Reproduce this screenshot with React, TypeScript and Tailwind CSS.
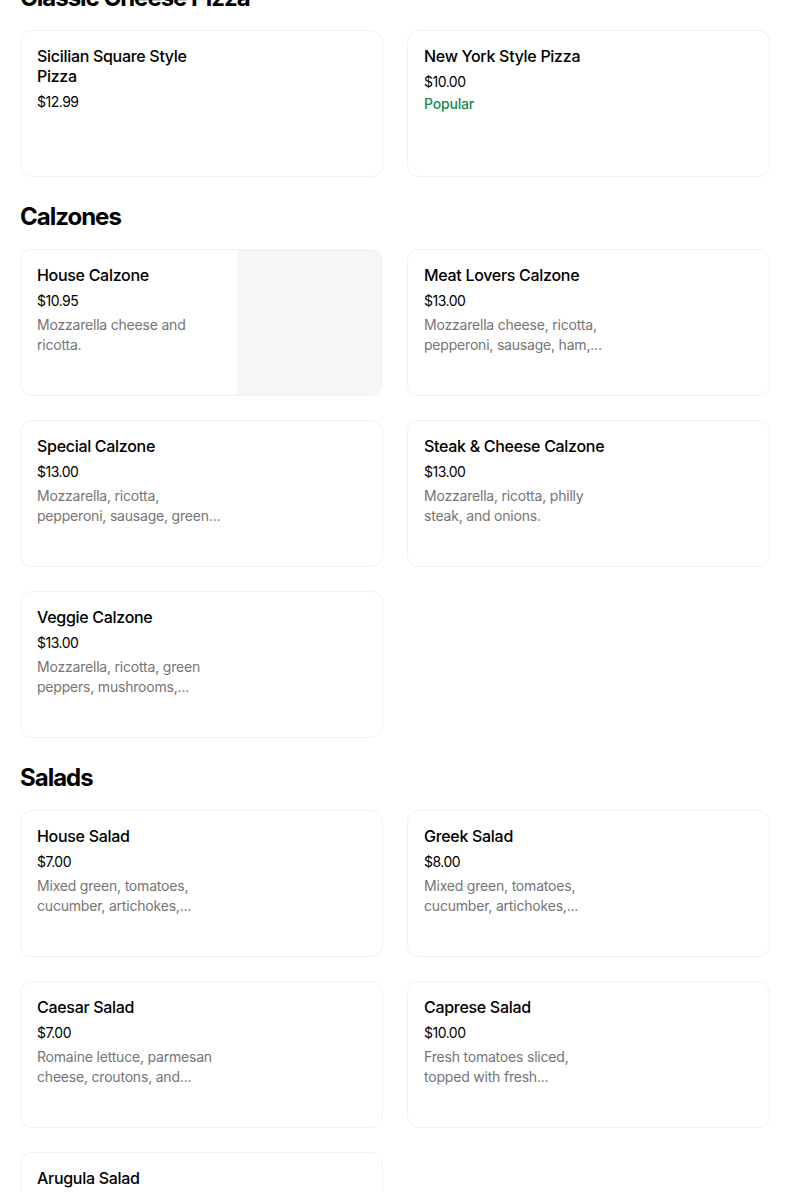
import React from "react";

type Item = { name: string; price: string; desc?: string; popular?: boolean; image?: boolean };
type Section = { title: string; items: Item[] };

const sections: Section[] = [
  {
    title: "Classic Cheese Pizza",
    items: [
      { name: "Sicilian Square Style Pizza", price: "$12.99" },
      { name: "New York Style Pizza", price: "$10.00", popular: true },
    ],
  },
  {
    title: "Calzones",
    items: [
      { name: "House Calzone", price: "$10.95", desc: "Mozzarella cheese and ricotta.", image: true },
      { name: "Meat Lovers Calzone", price: "$13.00", desc: "Mozzarella cheese, ricotta, pepperoni, sausage, ham,..." },
      { name: "Special Calzone", price: "$13.00", desc: "Mozzarella, ricotta, pepperoni, sausage, green..." },
      { name: "Steak & Cheese Calzone", price: "$13.00", desc: "Mozzarella, ricotta, philly steak, and onions." },
      { name: "Veggie Calzone", price: "$13.00", desc: "Mozzarella, ricotta, green peppers, mushrooms,..." },
    ],
  },
  {
    title: "Salads",
    items: [
      { name: "House Salad", price: "$7.00", desc: "Mixed green, tomatoes, cucumber, artichokes,..." },
      { name: "Greek Salad", price: "$8.00", desc: "Mixed green, tomatoes, cucumber, artichokes,..." },
      { name: "Caesar Salad", price: "$7.00", desc: "Romaine lettuce, parmesan cheese, croutons, and..." },
      { name: "Caprese Salad", price: "$10.00", desc: "Fresh tomatoes sliced, topped with fresh..." },
      { name: "Arugula Salad", price: "$9.00", desc: "Arugula, tomatoes, parmesan cheese and balsamic." },
    ],
  },
];

function Card({ item }: { item: Item }) {
  return (
    <div className="flex h-[147px] overflow-hidden rounded-xl border border-[#f1f1f1] bg-white">
      <div className="w-[204px] shrink-0 pl-4 pr-[2px] pt-[15px]">
        <div className="text-[16px] font-medium leading-5 tracking-[-0.3px] text-black">{item.name}</div>
        <div className="mt-[6px] text-[14px] leading-5 tracking-[-0.5px] text-black">{item.price}</div>
        {item.desc && (
          <div className="mt-1 line-clamp-2 text-[14px] leading-5 tracking-[-0.2px] text-[#757575]">{item.desc}</div>
        )}
        {item.popular && (
          <div className="mt-[2px] text-[14px] font-medium leading-5 tracking-[-0.2px] text-[#138a4b]">Popular</div>
        )}
      </div>
      <div className="flex-1" />
      {item.image && <div className="w-[145px] shrink-0 bg-[#f6f6f6]" />}
    </div>
  );
}

export default function App() {
  return (
    <div
      className="mt-[-18px] w-[804px] bg-white pl-5 pr-[34px]"
      style={{ fontFamily: "Inter, 'Liberation Sans', sans-serif" }}
    >
      {sections.map((s, i) => (
        <div key={s.title} className={i === 0 ? "" : "mt-6"}>
          <h2 className="text-[24px] font-bold leading-8 tracking-[-1px] text-black">{s.title}</h2>
          <div className="mt-4 grid grid-cols-2 gap-6">
            {s.items.map((it) => (
              <Card key={it.name} item={it} />
            ))}
          </div>
        </div>
      ))}
    </div>
  );
}
